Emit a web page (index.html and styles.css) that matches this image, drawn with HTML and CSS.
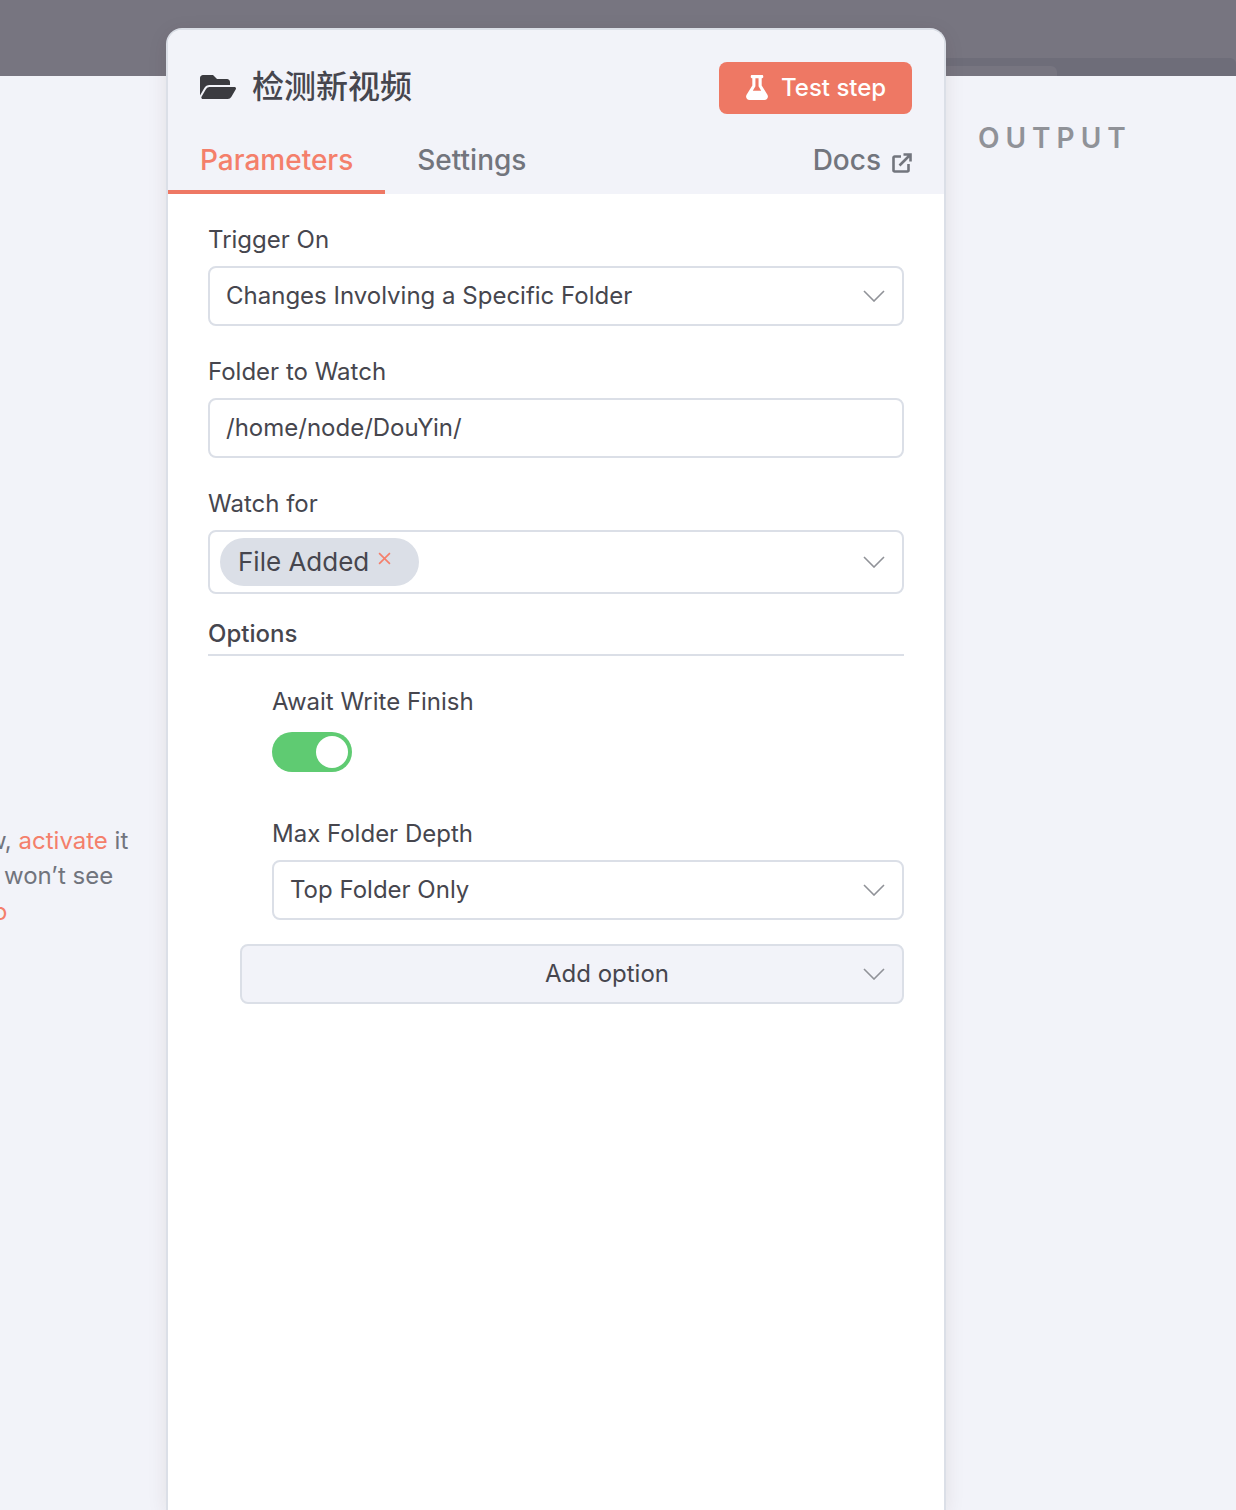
FILE: index.html
```html
<!DOCTYPE html>
<html lang="en">
<head>
<meta charset="utf-8">
<title>检测新视频</title>
<link rel="stylesheet" href="styles.css">
</head>
<body>
<div class="band"><div class="band-lower"><div class="band-tab"></div></div></div>
<div class="ndv">
  <aside class="input-col">
    <div class="hint">
      <div class="hint-line line-a">w, <span class="accent">activate</span> it</div>
      <div class="hint-line line-b">won’t see</div>
      <div class="hint-line line-c accent">o</div>
    </div>
  </aside>
  <main class="panel">
    <header class="panel-head">
      <div class="title-row">
        <div class="title">
          <svg class="folder-icon" viewBox="0 0 576 512"><path d="M572.694 292.093L500.27 416.248A63.997 63.997 0 0 1 444.989 448H45.025c-18.523 0-30.064-20.093-20.731-36.093l72.424-124.155A64 64 0 0 1 152 256h399.964c18.523 0 30.064 20.093 20.73 36.093zM152 224h328v-48c0-26.51-21.49-48-48-48H272l-64-64H48C21.49 64 0 85.49 0 112v278.046l69.077-118.418C86.214 242.25 117.989 224 152 224z"/></svg>
          <span class="title-text">检测新视频</span>
        </div>
        <button class="test-btn">
          <svg class="flask-icon" viewBox="0 0 448 512"><path d="M437.2 403.5L320 215V64h8c13.3 0 24-10.7 24-24V24c0-13.3-10.7-24-24-24H120c-13.3 0-24 10.7-24 24v16c0 13.3 10.7 24 24 24h8v151L10.8 403.5C-18.5 450.6 15.3 512 70.9 512h306.2c55.7 0 89.4-61.5 60.1-108.5zM137.9 320l48.2-77.6c3.7-5.2 5.8-11.6 5.8-18.4V64h64v160c0 6.9 2.2 13.2 5.8 18.4l48.2 77.6h-172z"/></svg>
          <span>Test step</span>
        </button>
      </div>
      <nav class="tabs">
        <div class="tab active">Parameters</div>
        <div class="tab">Settings</div>
        <div class="tab docs">Docs
          <svg class="ext-icon" viewBox="0 0 20 20"><path d="M9 3.5H2.6A1.1 1.1 0 0 0 1.5 4.6v12.8a1.1 1.1 0 0 0 1.1 1.1h12.8a1.1 1.1 0 0 0 1.1-1.1V11M7.5 12.5 18 2M11.5 1.5h7v7"/></svg>
        </div>
      </nav>
    </header>
    <section class="panel-body">
      <div class="field">
        <label class="label">Trigger On</label>
        <div class="control">Changes Involving a Specific Folder<svg class="chev" viewBox="0 0 22 12"><path d="M1 1l10 10L21 1"/></svg></div>
      </div>
      <div class="field">
        <label class="label">Folder to Watch</label>
        <div class="control">/home/node/DouYin/</div>
      </div>
      <div class="field">
        <label class="label">Watch for</label>
        <div class="control multi">
          <span class="chip">File Added<svg class="chip-x" viewBox="0 0 12 12"><path d="M1 1l10 10M11 1L1 11"/></svg></span>
          <svg class="chev" viewBox="0 0 22 12"><path d="M1 1l10 10L21 1"/></svg>
        </div>
      </div>
      <div class="options-head">Options</div>
      <div class="options">
        <div class="field nested">
          <label class="label">Await Write Finish</label>
          <div class="toggle-row"><span class="toggle"><span class="knob"></span></span></div>
        </div>
        <div class="field nested depth">
          <label class="label">Max Folder Depth</label>
          <div class="control">Top Folder Only<svg class="chev" viewBox="0 0 22 12"><path d="M1 1l10 10L21 1"/></svg></div>
        </div>
      </div>
      <div class="control add-option"><span class="add-text">Add option</span><svg class="chev" viewBox="0 0 22 12"><path d="M1 1l10 10L21 1"/></svg></div>
    </section>
  </main>
  <aside class="output-col"><div class="output-title">OUTPUT</div></aside>
</div>
</body>
</html>
```
FILE: styles.css
```css
* { box-sizing: border-box; }
html, body { margin: 0; height: 100%; }
body {
  position: relative;
  height: 1510px;
  overflow: hidden;
  background: #f2f3f9;
  font-family: Inter, "Noto Sans CJK SC", sans-serif;
  color: #46464e;
}
.band {
  position: absolute;
  top: 0; left: 0; right: 0;
  height: 76px;
  background: #777580;
}
.band-lower {
  position: absolute;
  left: 946px; right: 0; top: 58px; bottom: 0;
  background: #6e6d79;
  border-radius: 0 6px 0 0;
}
.band-tab {
  position: absolute;
  left: 0; top: 8px; bottom: 0;
  width: 111px;
  background: #777580;
  border-radius: 0 6px 0 0;
}
.ndv {
  position: relative;
  display: grid;
  grid-template-columns: 166px 780px 290px;
  height: 1510px;
}
.input-col { overflow: hidden; padding-top: 823px; }
.hint { font-size: 24px; line-height: 36px; color: #71747d; white-space: nowrap; }
.hint-line { display: block; }
.line-a { margin-left: -13px; }
.line-b { margin-left: 4px; margin-top: -1px; }
.line-c { margin-left: -7px; }
.accent { color: #f47f6b; }
.panel {
  margin-top: 28px;
  background: #fff;
  border: 2px solid #dbdfe7;
  border-bottom: 0;
  border-radius: 16px 16px 0 0;
  box-shadow: 0 4px 20px rgba(68, 28, 23, 0.09);
  display: flex;
  flex-direction: column;
  min-height: 0;
}
.panel-head {
  background: #f2f3f9;
  border-radius: 14px 14px 0 0;
  height: 164px;
  display: flex;
  flex-direction: column;
}
.title-row {
  display: flex;
  justify-content: space-between;
  align-items: center;
  padding: 32px 32px 0 32px;
  height: 84px;
}
.title { display: flex; align-items: center; gap: 16px; }
.folder-icon { width: 36px; height: 32px; fill: #3b3b40; display: block; margin-top: -2px; }
.title-text { font-size: 32px; font-weight: 500; color: #46464e; line-height: 52px; margin-top: -2px; }
.test-btn {
  display: flex;
  align-items: center;
  gap: 13px;
  width: 193px;
  height: 52px;
  padding: 0 0 2px 27px;
  border: 0;
  border-radius: 8px;
  background: #ee7864;
  color: #fff;
  font: 500 24px Inter, sans-serif;
}
.flask-icon { width: 22px; height: 25px; fill: #fff; display: block; }
.tabs { display: flex; height: 80px; }
.tab {
  font-size: 28px;
  font-weight: 500;
  color: #72757d;
  padding: 28px 32px 0 32px;
  line-height: 36px;
  height: 80px;
  border-bottom: 4px solid transparent;
}
.tab.active { color: #f47f6b; border-bottom-color: #ee7864; }
.docs { margin-left: auto; display: flex; align-items: flex-start; gap: 11px; }
.ext-icon { width: 20px; height: 20px; margin-top: 11px; fill: none; stroke: #72757d; stroke-width: 2.6; }
.panel-body { padding: 28px 40px 0 40px; display: flex; flex-direction: column; }
.field { margin-bottom: 28px; }
.label { display: block; font-size: 24px; line-height: 36px; margin-bottom: 8px; color: #46464e; }
.control {
  position: relative;
  display: flex;
  align-items: center;
  height: 60px;
  padding: 0 16px 2px;
  border: 2px solid #dbdfe7;
  border-radius: 8px;
  background: #fff;
  font-size: 24px;
  color: #46464e;
}
.chev {
  position: absolute;
  right: 17px;
  top: 50%;
  width: 22px;
  height: 12px;
  margin-top: -6px;
  fill: none;
  stroke: #909298;
  stroke-width: 1.6;
}
.multi { height: 64px; padding: 0 10px; }
.chip {
  display: flex;
  align-items: center;
  gap: 9px;
  height: 48px;
  padding: 0 28px 2px 18px;
  border-radius: 24px;
  background: #dbdfe7;
  font-size: 26px;
}
.chip-x { width: 13px; height: 13px; margin-top: -6px; fill: none; stroke: #f47f6b; stroke-width: 1.5; }
.options-head {
  margin-top: -6px;
  height: 40px;
  font-size: 24px;
  font-weight: 500;
  line-height: 36px;
  border-bottom: 2px solid #dbdfe7;
}
.options { padding: 28px 0 0 64px; }
.nested { margin-bottom: 40px; }
.nested.depth { margin-bottom: 24px; }
.toggle-row { height: 48px; display: flex; align-items: center; }
.toggle {
  display: flex;
  justify-content: flex-end;
  align-items: center;
  width: 80px;
  height: 40px;
  padding: 4px;
  border-radius: 20px;
  background: #5fcb72;
}
.knob { width: 32px; height: 32px; border-radius: 50%; background: #fff; }
.add-option { margin-left: 32px; background: #f2f3f9; justify-content: center; padding-left: 86px; padding-right: 16px; }
.output-col { padding: 76px 0 0 32px; }
.output-title {
  margin-top: 44px;
  font-size: 28px;
  font-weight: 600;
  line-height: 36px;
  letter-spacing: 6px;
  color: #909298;
}
```
